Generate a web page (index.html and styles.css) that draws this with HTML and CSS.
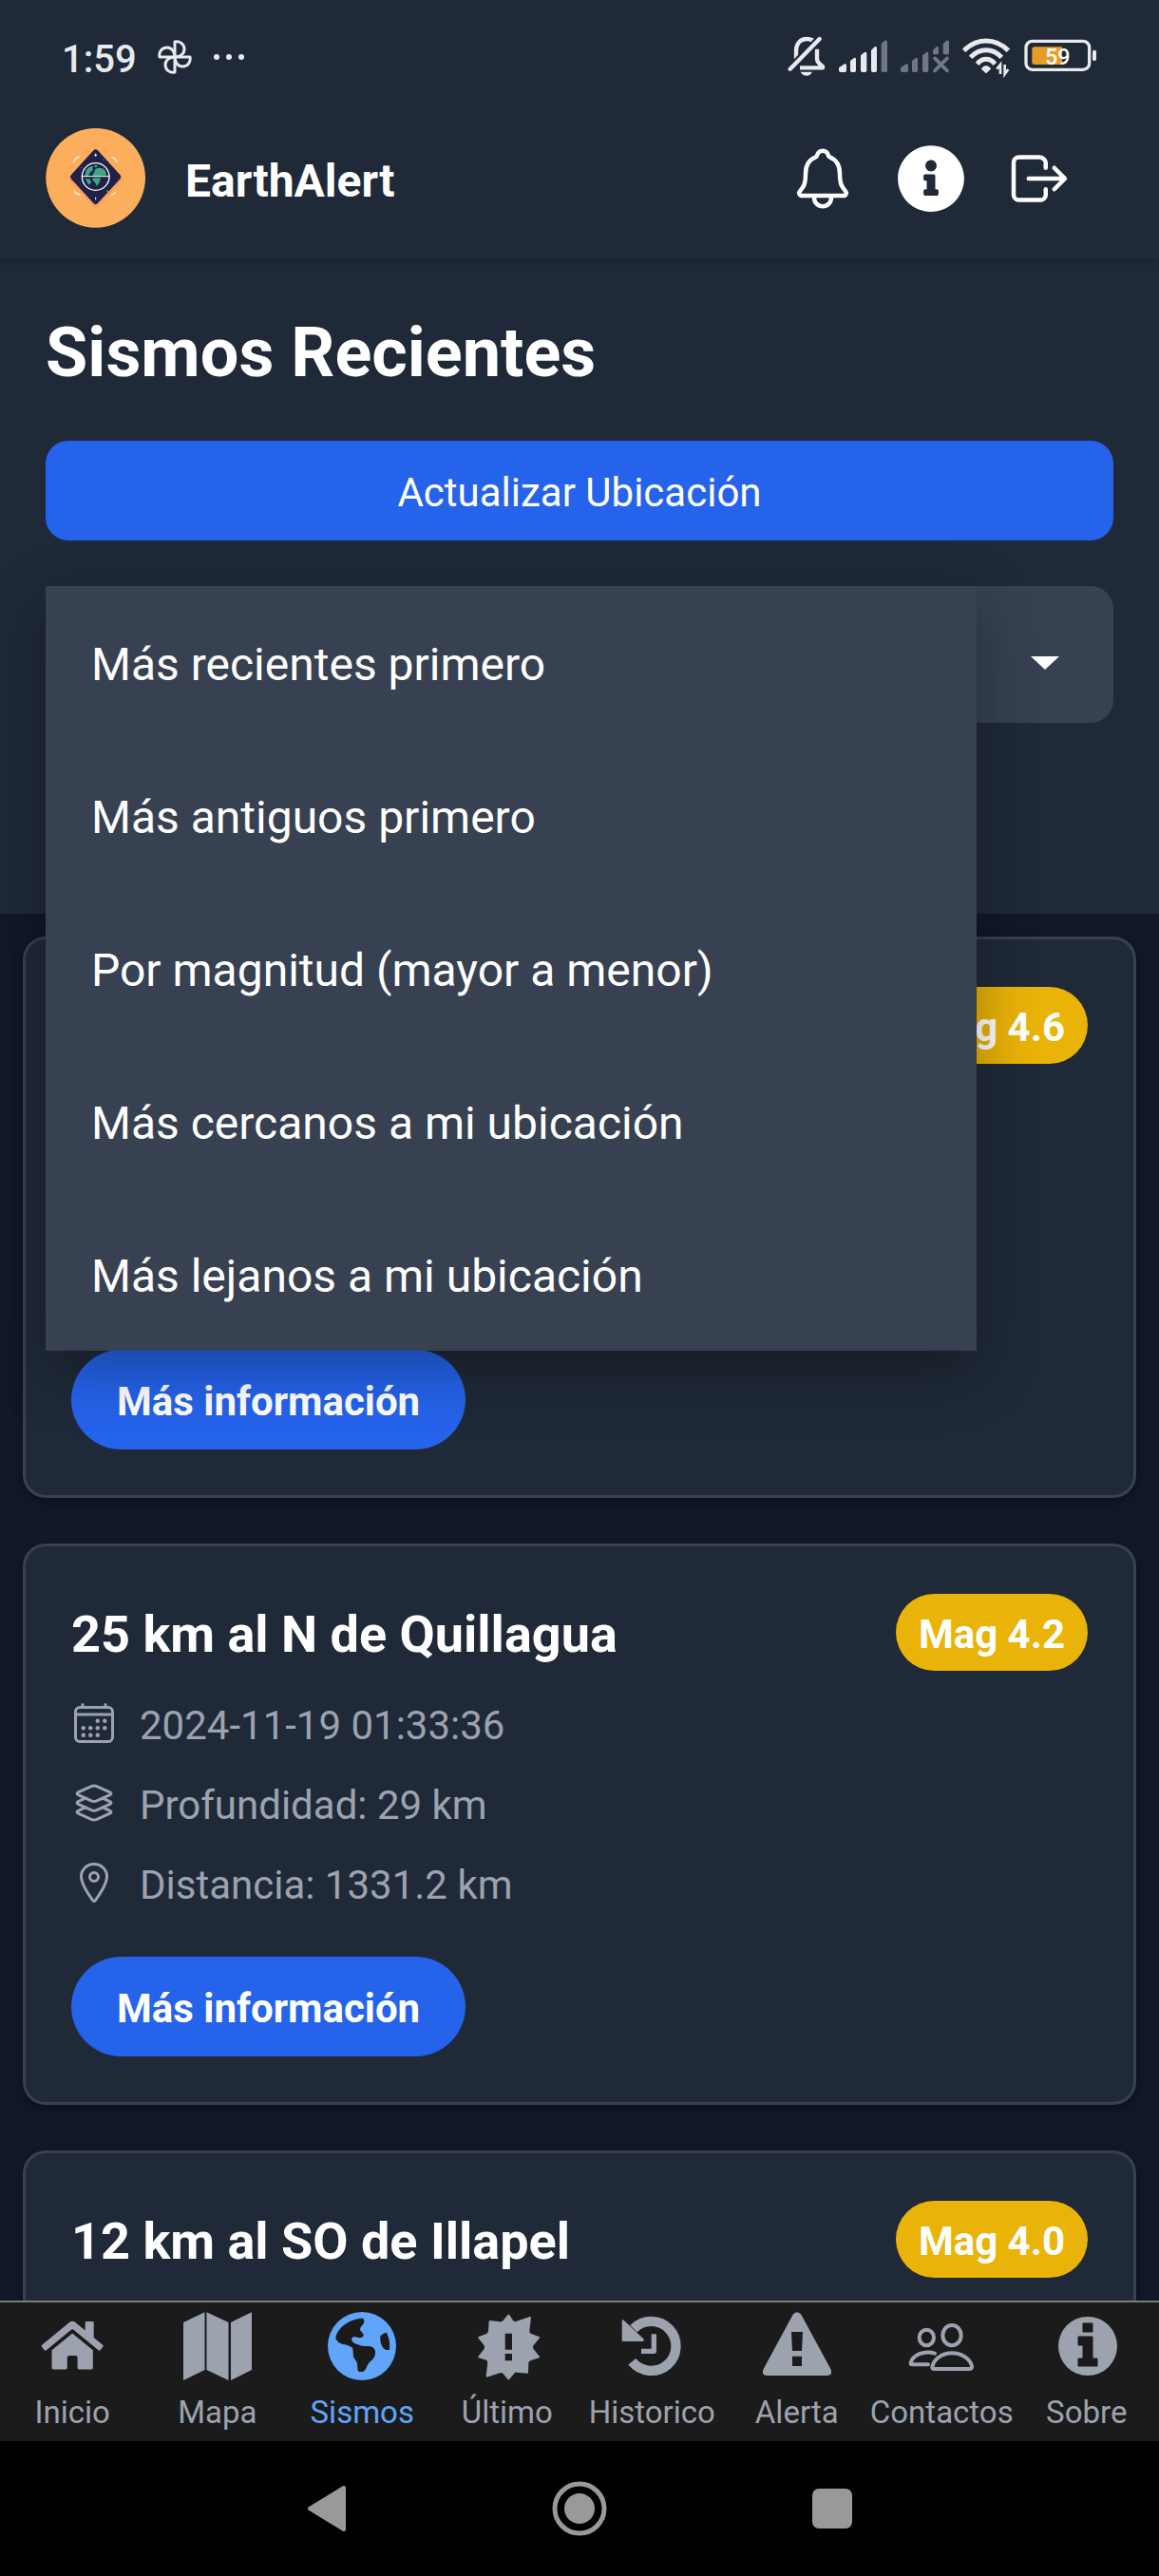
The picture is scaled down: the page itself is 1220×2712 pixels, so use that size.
FILE: index.html
```html
<!DOCTYPE html>
<html lang="es">
<head>
<meta charset="utf-8">
<meta name="viewport" content="width=device-width, initial-scale=1">
<title>EarthAlert</title>
<link rel="stylesheet" href="styles.css">
</head>
<body>
<div class="app">
  <header class="top">
    <div class="status">
      <div class="status-left">
        <span class="time">1:59</span>
        <svg class="fan" viewBox="0 0 36 36" fill="none" stroke="currentColor" stroke-width="3" stroke-linejoin="round" aria-hidden="true">
          <path d="M18 18V2c5-1 10 2 10 8 0 5-5 8-10 8z"/>
          <path d="M18 18h16c1 5-2 10-8 10-5 0-8-5-8-10z"/>
          <path d="M18 18v16c-5 1-10-2-10-8 0-5 5-8 10-8z"/>
          <path d="M18 18H2c-1-5 2-10 8-10 5 0 8 5 8 10z"/>
        </svg>
        <svg class="dots" viewBox="0 0 34 8" fill="currentColor" aria-hidden="true"><circle cx="4" cy="4" r="3"/><circle cx="17" cy="4" r="3"/><circle cx="30" cy="4" r="3"/></svg>
      </div>
      <div class="status-right">
        <svg class="st-bell" viewBox="147 117 120 132" aria-hidden="true">
          <path d="M174 200V164C174 140 188 126 207 126 221 126 232 131 238 144M240 158V190C240 202 250 206 258 213V217H186" fill="none" stroke="currentColor" stroke-width="13" stroke-linejoin="round"/>
          <path d="M155 221L248 126" stroke="#1f2937" stroke-width="26"/>
          <path d="M155 221L248 126" stroke="currentColor" stroke-width="13" stroke-linecap="round"/>
          <path d="M188 230h37c-4 8-10 12-18 12s-15-4-19-12z" fill="currentColor"/>
        </svg>
        <svg class="st-signal" viewBox="309 117 153 132" fill="currentColor" aria-hidden="true">
          <path d="M309 217l18-12q6-2 6 4v17q0 5-5 5h-14q-5 0-5-5zM345 195l12-9q6-2 6 4v36q0 5-5 5h-8q-5 0-5-5zM378 178l12-10q7-3 7 4v54q0 5-5 5h-9q-5 0-5-5zM411 162l11-11q7-3 7 4v71q0 5-5 5h-8q-5 0-5-5z"/>
          <path class="dim" d="M443 141l11-10q8-3 8 5v90q0 5-5 5h-9q-5 0-5-5z"/>
        </svg>
        <svg class="st-signal dim" viewBox="504 117 153 132" fill="currentColor" aria-hidden="true">
          <path d="M504 217l18-12q6-2 6 4v17q0 5-5 5h-14q-5 0-5-5zM540 195l12-9q6-2 6 4v36q0 5-5 5h-8q-5 0-5-5zM573 178l12-10q7-3 7 4v54q0 5-5 5h-9q-5 0-5-5zM606 162l11-11q7-3 7 4v15q0 5-5 5h-8q-5 0-5-5zM638 141l11-10q8-3 8 5v34q0 5-5 5h-9q-5 0-5-5z"/>
          <path d="M612 187l39 39M651 187l-39 39" fill="none" stroke="currentColor" stroke-width="11" stroke-linecap="round"/>
        </svg>
        <svg class="st-signal" viewBox="700 117 153 132" fill="none" stroke="currentColor" stroke-width="15" aria-hidden="true">
          <path d="M705 163Q735 132 775 132t70 31M726 184Q747 161 775 161t49 23M747 205q12-15 28-15t28 15"/>
          <path d="M763 220q12-14 24 0l-12 11z" fill="currentColor" stroke-width="6" stroke-linejoin="round"/>
          <path d="M820 237v-30l-11 14M834 207v30l11-15" stroke-width="8"/>
        </svg>
        <svg class="st-battery" viewBox="897 117 231 132" role="img" aria-label="Batería">
          <path d="M930 151h87v56h-87q-8 0-8-8v-40q0-8 8-8z" fill="#e69d26"/>
          <rect x="903" y="133" width="200" height="90" rx="20" fill="none" stroke="currentColor" stroke-width="10"/>
          <rect x="1113" y="161" width="12" height="34" rx="5" fill="currentColor"/>
          <text x="1003" y="208" text-anchor="middle" class="battery-text">59</text>
        </svg>
      </div>
    </div>
    <div class="bar">
      <svg class="logo" viewBox="24 21 315 315" role="img" aria-label="Logo">
        <circle cx="182" cy="178" r="157" fill="#fdae5c"/>
        <path d="M182 100l72 80-72 80-72-80z" fill="#f28a5a" stroke="#f6965c" stroke-width="24" stroke-linejoin="round" opacity=".6"/>
        <path d="M182 97l71 78-71 77-71-77z" fill="#1f2147" stroke="#1f2147" stroke-width="18" stroke-linejoin="round"/>
        <path d="M113 128q5-14 17-17M233 112q12 4 16 16M114 218q7 12 20 14M231 232q10-2 14-10" fill="none" stroke="#fff3df" stroke-width="4"/>
        <path d="M152 154q10-14 22-13l-2 14-9 7-3 10h-13zM178 138h9v6h-9zM172 172l9-22q12-6 22-2 12 4 13 22zM150 180l14 2 4 10-6 8q-8-6-12-20zM174 178h24l-4 14-8 12-6-12-8-6z" fill="#3fa584"/>
        <path d="M136 145h4v3h-4zM216 217h6v4h-6zM205 119h3v3h-3z" fill="#3fa584"/>
        <circle cx="182" cy="174" r="43" fill="none" stroke="#fff" stroke-width="4"/>
        <path d="M138 173h88M182 101v9M178 106h8M182 239v8" stroke="#fff" stroke-width="3"/>
      </svg>
      <span class="brand">EarthAlert</span>
      <div class="actions">
        <button class="icon-btn" aria-label="Notificaciones">
          <svg viewBox="0 0 512 512" fill="none" stroke="currentColor" stroke-width="32" stroke-linecap="round" stroke-linejoin="round"><path d="M427.68 351.43C402 320 383.87 304 383.87 217.35 383.87 138 343.35 109.73 310 96c-4.43-1.82-8.6-6-9.95-10.55C294.2 65.54 277.8 48 256 48s-38.21 17.55-44 37.47c-1.35 4.6-5.52 8.71-9.95 10.53-33.39 13.75-73.87 41.92-73.87 121.35C128.13 304 110 320 84.32 351.43 73.68 364.45 83 384 101.61 384h308.88c18.51 0 27.77-19.61 17.19-32.57zM320 384v16a64 64 0 01-128 0v-16"/></svg>
        </button>
        <button class="icon-btn" aria-label="Información">
          <svg viewBox="0 0 512 512" fill="currentColor"><path d="M256 8C119.043 8 8 119.083 8 256c0 136.997 111.043 248 248 248s248-111.003 248-248C504 119.083 392.957 8 256 8zm0 110c23.196 0 42 18.804 42 42s-18.804 42-42 42-42-18.804-42-42 18.804-42 42-42zm56 254c0 6.627-5.373 12-12 12h-88c-6.627 0-12-5.373-12-12v-24c0-6.627 5.373-12 12-12h12v-64h-12c-6.627 0-12-5.373-12-12v-24c0-6.627 5.373-12 12-12h64c6.627 0 12 5.373 12 12v100h12c6.627 0 12 5.373 12 12v24z"/></svg>
        </button>
        <button class="icon-btn" aria-label="Salir">
          <svg viewBox="0 0 512 512" fill="none" stroke="currentColor" stroke-width="32" stroke-linecap="round" stroke-linejoin="round"><path d="M304 336v40a40 40 0 01-40 40H104a40 40 0 01-40-40V136a40 40 0 0140-40h152c22.09 0 48 17.91 48 40v40M368 336l80-80-80-80M176 256h256"/></svg>
        </button>
      </div>
    </div>
  </header>

  <section class="filters">
    <h1>Sismos Recientes</h1>
    <button class="update">Actualizar Ubicación</button>
    <div class="picker">
      <select class="picker-select" aria-label="Orden">
        <option>Más recientes primero</option>
      </select>
      <svg class="caret" viewBox="0 0 30 14" fill="currentColor" aria-hidden="true"><path d="M0 0h30L15 14z"/></svg>
      <div class="menu" role="listbox" aria-label="Orden">
        <button class="option" role="option">Más recientes primero</button>
        <button class="option" role="option">Más antiguos primero</button>
        <button class="option" role="option">Por magnitud (mayor a menor)</button>
        <button class="option" role="option">Más cercanos a mi ubicación</button>
        <button class="option" role="option">Más lejanos a mi ubicación</button>
      </div>
    </div>
  </section>

  <main class="list">
    <article class="card">
      <div class="card-head"><span class="badge">Mag 4.6</span></div>
      <div class="details"></div>
      <button class="more">Más información</button>
    </article>
    <article class="card">
      <div class="card-head"><h2>25 km al N de Quillagua</h2><span class="badge">Mag 4.2</span></div>
      <div class="details">
        <div class="detail">
          <svg viewBox="0 0 512 512" fill="none" stroke="currentColor" stroke-width="32" stroke-linejoin="round" stroke-linecap="round" aria-hidden="true"><rect x="48" y="80" width="416" height="384" rx="48"/><path d="M128 48v32M384 48v32M464 160H48" /><g fill="currentColor" stroke="none"><circle cx="296" cy="232" r="24"/><circle cx="376" cy="232" r="24"/><circle cx="296" cy="312" r="24"/><circle cx="376" cy="312" r="24"/><circle cx="136" cy="312" r="24"/><circle cx="216" cy="312" r="24"/><circle cx="136" cy="392" r="24"/><circle cx="216" cy="392" r="24"/><circle cx="296" cy="392" r="24"/></g></svg>
          <span>2024-11-19 01:33:36</span>
        </div>
        <div class="detail">
          <svg viewBox="0 0 512 512" fill="none" stroke="currentColor" stroke-width="32" stroke-linejoin="round" stroke-linecap="round" aria-hidden="true"><path d="M434.8 137.65l-149.36-68.1c-16.19-7.4-42.69-7.4-58.88 0L77.3 137.65c-17.6 8-17.6 21.09 0 29.09l148 67.5c16.89 7.7 44.69 7.7 61.58 0l148-67.5c17.52-8 17.52-21.1-.08-29.09zM160 308.52l-82.7 37.11c-17.6 8-17.6 21.1 0 29.1l148 67.5c16.89 7.69 44.69 7.69 61.58 0l148-67.5c17.6-8 17.6-21.1 0-29.1l-79.94-38.47"/><path d="M160 204.48l-82.8 37.16c-17.6 8-17.6 21.1 0 29.1l148 67.49c16.89 7.7 44.69 7.7 61.58 0l148-67.49c17.7-8 17.7-21.1.1-29.1L352 204.48"/></svg>
          <span>Profundidad: 29 km</span>
        </div>
        <div class="detail">
          <svg viewBox="0 0 512 512" fill="none" stroke="currentColor" stroke-width="32" stroke-linejoin="round" stroke-linecap="round" aria-hidden="true"><path d="M256 48c-79.5 0-144 61.39-144 137 0 87 96 224.87 131.25 272.49a15.77 15.77 0 0025.5 0C304 409.89 400 272.07 400 185c0-75.61-64.5-137-144-137z"/><circle cx="256" cy="192" r="48"/></svg>
          <span>Distancia: 1331.2 km</span>
        </div>
      </div>
      <button class="more">Más información</button>
    </article>
    <article class="card">
      <div class="card-head"><h2>12 km al SO de Illapel</h2><span class="badge">Mag 4.0</span></div>
      <div class="details"></div>
    </article>
  </main>

  <nav class="tabs">
    <a class="tab" href="#inicio">
      <svg viewBox="-33 -57 639 639" fill="currentColor" aria-hidden="true"><path d="M280.37 148.26L96 300.11V464a16 16 0 0 0 16 16l112.06-.29a16 16 0 0 0 15.92-16V368a16 16 0 0 1 16-16h64a16 16 0 0 1 16 16v95.64a16 16 0 0 0 16 16.05L464 480a16 16 0 0 0 16-16V300L295.67 148.26a12.19 12.19 0 0 0-15.3 0zM571.6 251.47L488 182.56V44.05a12 12 0 0 0-12-12h-56a12 12 0 0 0-12 12v72.61L318.47 43a48 48 0 0 0-61 0L4.34 251.47a12 12 0 0 0-1.6 16.9l25.5 31A12 12 0 0 0 45.15 301l235.22-193.74a12.19 12.19 0 0 1 15.3 0L530.9 301a12 12 0 0 0 16.9-1.6l25.5-31a12 12 0 0 0-1.7-16.93z"/></svg>
      <span>Inicio</span>
    </a>
    <a class="tab" href="#mapa">
      <svg viewBox="0 0 72 72" fill="currentColor" aria-hidden="true"><path d="M0 11L22.500 .2V61L0 72zM24.500 .2L47.500 11v61L24.500 61zM50 11L72 .2V61L50 72z"/></svg>
      <span>Mapa</span>
    </a>
    <a class="tab active" href="#sismos" aria-current="page">
      <svg viewBox="18 15 216 216" aria-hidden="true"><circle cx="126" cy="123" r="108" fill="currentColor"/><path fill="#1b1b1b" d="M127 35C133 34 135 45 131 52 128 58 120 62 120 70 120 76 130 80 131 88 131 95 124 97 116 97 108 93 98 92 94 98 91 106 100 113 110 117 120 121 126 123 134 123 150 123 165 122 168 140 169 150 165 160 158 167 150 172 146 178 143 184 140 192 136 203 128 204 116 205 112 204 112 192 112 180 111 172 102 163 97 155 99 145 97 130 90 123 80 120 70 118 55 115 46 108 43 96 49 68 80 38 127 35zM203 80C212 94 215 115 213 134 206 136 200 136 194 130 186 120 182 104 184 92 188 86 196 81 203 80z"/></svg>
      <span>Sismos</span>
    </a>
    <a class="tab" href="#ultimo">
      <svg viewBox="473 12 216 216" aria-hidden="true"><path fill="currentColor" stroke="currentColor" stroke-width="6" stroke-linejoin="round" d="M585 23L597 41Q602 47 609 45L653 30 648 72Q648 81 656 84L680 93 661 116Q657 123 661 130L680 154 655 162Q646 165 645 173L644 203 613 200Q605 199 600 205L585 223 570 205Q565 199 557 202L517 215 522 172Q522 163 514 161L492 154 510 131Q514 123 510 116L492 93 516 84Q524 80 524 72L526 42 557 46Q565 47 570 41z"/><path fill="#1b1b1b" d="M574 80h22v51h-22zM574 144h22v22h-22z"/></svg>
      <span>Último</span>
    </a>
    <a class="tab" href="#historico">
      <svg viewBox="-29 12 216 216" fill="none" stroke="currentColor" aria-hidden="true"><path stroke-width="31" d="M22 65A78 78 0 1 1 17 169"/><path d="M-12 40L51 99V102H-12z" fill="currentColor" stroke-width="6" stroke-linejoin="round"/><path stroke-width="16" stroke-linejoin="round" d="M86 82V136H46"/></svg>
      <span>Historico</span>
    </a>
    <a class="tab" href="#alerta">
      <svg viewBox="432 12 216 216" aria-hidden="true"><path fill="currentColor" d="M527 20Q540 5 553 20L646 192Q654 212 634 213H446Q426 212 434 192z"/><path fill="#1b1b1b" d="M522 75h36l-3 60h-30zM525 152h30v31h-30z"/></svg>
      <span>Alerta</span>
    </a>
    <a class="tab" href="#contactos">
      <svg viewBox="886 12 216 216" fill="none" stroke="currentColor" stroke-width="12" stroke-linecap="round" stroke-linejoin="round" aria-hidden="true"><ellipse cx="1027" cy="86" rx="29" ry="32"/><ellipse cx="947" cy="93" rx="23" ry="25"/><path d="M965 186C970 158 1000 142 1027 142 1055 142 1085 158 1090 184Q1091 192 1082 192H972Q965 192 965 186zM973 143C940 132 902 148 897 174Q897 178 902 178H952"/></svg>
      <span>Contactos</span>
    </a>
    <a class="tab" href="#sobre">
      <svg viewBox="0 0 72 72" aria-hidden="true"><circle cx="37" cy="36" r="31" fill="currentColor"/><path fill="#1b1b1b" d="M32 12h10v9H32zM27 26h15v23h5v8H27v-8h5V35h-5z" stroke="#1b1b1b" stroke-linejoin="round"/></svg>
      <span>Sobre</span>
    </a>
  </nav>

  <div class="sysnav">
    <button aria-label="Atrás"><svg viewBox="0 0 60 60" fill="currentColor"><path d="M12 30L48 8v44z" stroke="currentColor" stroke-width="4" stroke-linejoin="round"/></svg></button>
    <button aria-label="Inicio del sistema"><svg viewBox="0 0 60 60"><circle cx="30" cy="30" r="26" fill="none" stroke="currentColor" stroke-width="5"/><circle cx="30" cy="30" r="16" fill="currentColor"/></svg></button>
    <button aria-label="Aplicaciones recientes"><svg viewBox="0 0 60 60" fill="currentColor"><rect x="9" y="9" width="42" height="42" rx="7"/></svg></button>
  </div>
</div>
</body>
</html>
```
FILE: styles.css
```css
* {
  box-sizing: border-box;
}

body {
  margin: 0;
  background: #111827;
  color: #fff;
  font-family: Roboto, "Liberation Sans", sans-serif;
}

button,
select {
  margin: 0;
  padding: 0;
  border: 0;
  background: none;
  color: inherit;
  font: inherit;
}

svg {
  display: block;
  flex: none;
}

h1,
h2 {
  margin: 0;
  font-weight: 700;
}

.app {
  display: flex;
  flex-direction: column;
  height: 100vh;
}

/* Header */
.top {
  position: relative;
  padding-bottom: 32px;
  background: #1f2937;
  box-shadow: 0 3px 9px rgba(0, 0, 0, 0.16);
  z-index: 2;
}

.status {
  display: flex;
  justify-content: space-between;
  align-items: center;
  height: 120px;
  padding: 0 65px;
  color: #e8eaed;
}

.status-left,
.status-right {
  display: flex;
  align-items: center;
}

.status-left {
  gap: 22px;
}

.status-right {
  gap: 14px;
}

.time {
  padding-top: 4px;
  font-size: 40px;
  font-weight: 500;
}

.fan {
  width: 36px;
  height: 36px;
}

.dots {
  width: 34px;
  height: 8px;
}

.st-bell {
  width: 40px;
  height: 44px;
}

.st-signal {
  width: 51px;
  height: 44px;
}

.st-battery {
  width: 77px;
  height: 44px;
}

.battery-text {
  fill: #fff;
  font-size: 70px;
  font-weight: 500;
}

.dim {
  color: #717782;
  fill: #717782;
}

.bar {
  display: flex;
  align-items: center;
  padding: 15px 90px 0 48px;
}

.logo {
  width: 105px;
  height: 105px;
}

.brand {
  margin-left: 42px;
  padding-top: 6px;
  font-size: 48px;
  line-height: 72px;
  font-weight: 700;
}

.actions {
  display: flex;
  gap: 42px;
  margin-left: auto;
}

.icon-btn svg {
  width: 72px;
  height: 72px;
}

/* Title, update button and order picker */
.filters {
  position: relative;
  padding: 52px 48px 201px;
  background: #1f2937;
  z-index: 1;
}

h1 {
  margin-bottom: 44px;
  font-size: 72px;
  line-height: 96px;
}

.update {
  display: block;
  width: 100%;
  padding: 25px 24px 20px;
  border-radius: 24px;
  background: #2563eb;
  font-size: 42px;
  line-height: 60px;
}

.picker {
  position: relative;
  display: flex;
  align-items: center;
  margin-top: 48px;
  padding-right: 57px;
  border-radius: 24px;
  background: #374151;
}

.picker-select {
  flex: 1;
  height: 144px;
  padding-left: 48px;
  appearance: none;
  font-size: 48px;
}

.caret {
  width: 30px;
  height: 14px;
  margin-top: 18px;
}

.menu {
  position: absolute;
  top: 0;
  left: 0;
  width: calc(100% - 144px);
  background: #374151;
  box-shadow: 0 20px 60px rgba(0, 0, 0, 0.32);
}

.option {
  display: block;
  width: 100%;
  padding: 47px 48px 42px;
  font-size: 48px;
  line-height: 72px;
  text-align: left;
}

/* Earthquake cards */
.list {
  display: flex;
  flex: 1;
  flex-direction: column;
  gap: 48px;
  min-height: 0;
  padding: 24px;
  overflow-y: auto;
  scrollbar-width: none;
}

.card {
  flex: none;
  padding: 48px;
  border: 3px solid #374151;
  border-radius: 24px;
  background: #1f2937;
  box-shadow: 0 4px 10px rgba(0, 0, 0, 0.35);
}

.card-head {
  display: flex;
  justify-content: space-between;
  align-items: center;
  min-height: 84px;
}

h2 {
  padding-top: 6px;
  font-size: 54px;
  line-height: 78px;
}

.badge {
  margin-left: auto;
  padding: 13px 24px 8px;
  border-radius: 41px;
  background: #eab308;
  font-size: 42px;
  line-height: 60px;
  font-weight: 700;
}

.details {
  display: flex;
  flex-direction: column;
  gap: 24px;
  min-height: 228px;
  margin: 24px 0 48px;
  color: #9ca3af;
}

.detail {
  display: flex;
  align-items: center;
  gap: 24px;
  font-size: 42px;
}

.detail svg {
  width: 48px;
  height: 48px;
}

.detail span {
  padding-top: 6px;
  line-height: 54px;
}

.more {
  display: block;
  padding: 25px 48px 20px;
  border-radius: 53px;
  background: #2563eb;
  font-size: 42px;
  line-height: 60px;
  font-weight: 700;
}

/* Bottom tabs */
.tabs {
  position: relative;
  display: grid;
  grid-template-columns: repeat(8, minmax(0, 1fr));
  padding: 10px 0 6px;
  border-top: 2px solid #777b80;
  background: #1b1b1b;
}

.tab {
  display: flex;
  flex-direction: column;
  align-items: center;
  gap: 10px;
  color: #9ca3af;
  font-size: 33px;
  line-height: 48px;
  text-decoration: none;
}

.tab.active {
  color: #60a5fa;
}

.tab svg {
  width: 72px;
  height: 72px;
}

/* System navigation */
.sysnav {
  display: flex;
  justify-content: center;
  align-items: center;
  gap: 206px;
  height: 142px;
  background: #000;
  color: #999;
}

.sysnav svg {
  width: 60px;
  height: 60px;
}
```
